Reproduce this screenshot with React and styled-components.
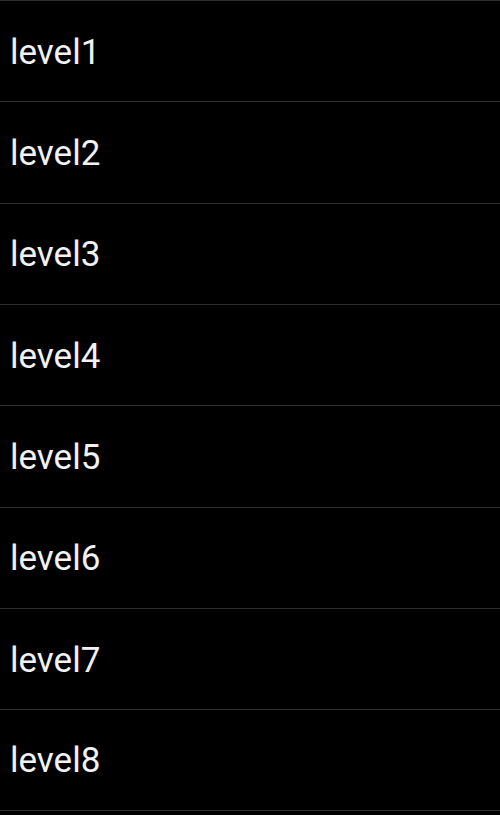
import React from "react";
import styled, { createGlobalStyle } from "styled-components";

const Global = createGlobalStyle`
  html, body { margin: 0; padding: 0; background: #000; }
  body { font-family: Roboto, "Liberation Sans", sans-serif; }
`;

const List = styled.div`
  display: flex;
  flex-direction: column;
  width: 500px;
  height: 815px;
  background: #000;
  box-sizing: border-box;
`;

const Row = styled.div`
  display: flex;
  align-items: center;
  height: 101.33px;
  flex: none;
  box-sizing: border-box;
  border-top: 1px solid #2e2e2e;
  border-bottom: ${(p) => (p.$last ? "1px solid #2e2e2e" : "none")};
  padding-left: 10px;
  padding-top: 2px;
  color: #f2f2f2;
  font-size: 35px;
  font-family: Roboto, "Liberation Sans", sans-serif;
`;

const levels = ["level1", "level2", "level3", "level4", "level5", "level6", "level7", "level8"];

export default function App() {
  return (
    <>
      <Global />
      <List>
        {levels.map((l, i) => (
          <Row key={l} $last={i === levels.length - 1}>{l}</Row>
        ))}
      </List>
    </>
  );
}
